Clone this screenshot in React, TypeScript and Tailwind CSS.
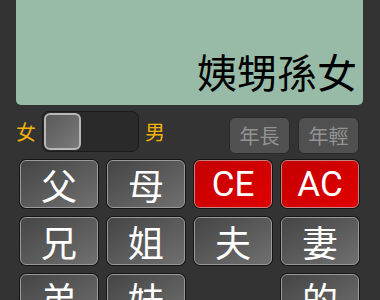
import React from 'react';

const cjk = { fontFamily: '"Noto Sans CJK TC", "Noto Sans", sans-serif' };
const roboto = { fontFamily: 'Roboto, "Liberation Sans", sans-serif' };

type Key = { label: string; red?: boolean } | null;

const keys: Key[] = [
  { label: '父' },
  { label: '母' },
  { label: 'CE', red: true },
  { label: 'AC', red: true },
  { label: '兄' },
  { label: '姐' },
  { label: '夫' },
  { label: '妻' },
  { label: '弟' },
  { label: '妹' },
  null,
  { label: '的' },
];

function CalcKey({ k }: { k: Key }) {
  if (!k) return <div />;
  const latin = /^[A-Z]+$/.test(k.label);
  return (
    <div className="rounded-[7px] bg-[#151515] p-px">
      <div
        className={
          'h-[48px] rounded-[6px] border flex items-center justify-center text-white leading-none ' +
          (k.red
            ? 'border-[#c98080] bg-gradient-to-br from-[#c40000] to-[#e00000]'
            : 'border-[#9a9a9a] bg-gradient-to-br from-[#454545] to-[#707070]')
        }
      >
        <span className={latin ? 'text-[35px]' : 'text-[36px]'} style={latin ? roboto : cjk}>
          {k.label}
        </span>
      </div>
    </div>
  );
}

export default function App() {
  return (
    <div className="w-[380px] h-[300px] overflow-hidden bg-[#333333]" style={cjk}>
      {/* DISPLAY */}
      <div className="ml-4 w-[347px] h-[105px] rounded-b-[5px] bg-[#98bba8] flex items-end justify-end pr-[6px] pb-[14px]">
        <span className="text-[40px] leading-none text-black" style={cjk}>
          姨甥孫女
        </span>
      </div>

      {/* GENDER / AGE ROW */}
      <div className="flex items-center mt-[6px] h-[41px]">
        <span className="ml-[16px] text-[20px] text-[#f2b20c] leading-none">女</span>
        <div className="ml-[6px] w-[97px] h-[41px] rounded-[7px] bg-[#2a2a2a] border border-[#1c1c1c] p-px">
          <div className="w-[37px] h-full rounded-[6px] border-2 border-[#b8b8b8] bg-gradient-to-br from-[#5a5a5a] to-[#7a7a7a]" />
        </div>
        <span className="ml-[6px] text-[20px] text-[#f2b20c] leading-none">男</span>
        <div className="ml-auto mr-[21px] flex gap-[8px] mt-[8px]">
          <div className="w-[61px] h-[37px] rounded-[6px] bg-[#505050] border border-[#2a2a2a] flex items-center justify-center text-[20px] text-[#939393] leading-none">
            年長
          </div>
          <div className="w-[61px] h-[37px] rounded-[6px] bg-[#505050] border border-[#2a2a2a] flex items-center justify-center text-[20px] text-[#939393] leading-none">
            年輕
          </div>
        </div>
      </div>

      {/* KEYPAD */}
      <div className="grid grid-cols-[repeat(4,80px)] gap-x-[7px] gap-y-[7px] pl-[19px] mt-[7px]">
        {keys.map((k, i) => (
          <CalcKey key={i} k={k} />
        ))}
      </div>
    </div>
  );
}
